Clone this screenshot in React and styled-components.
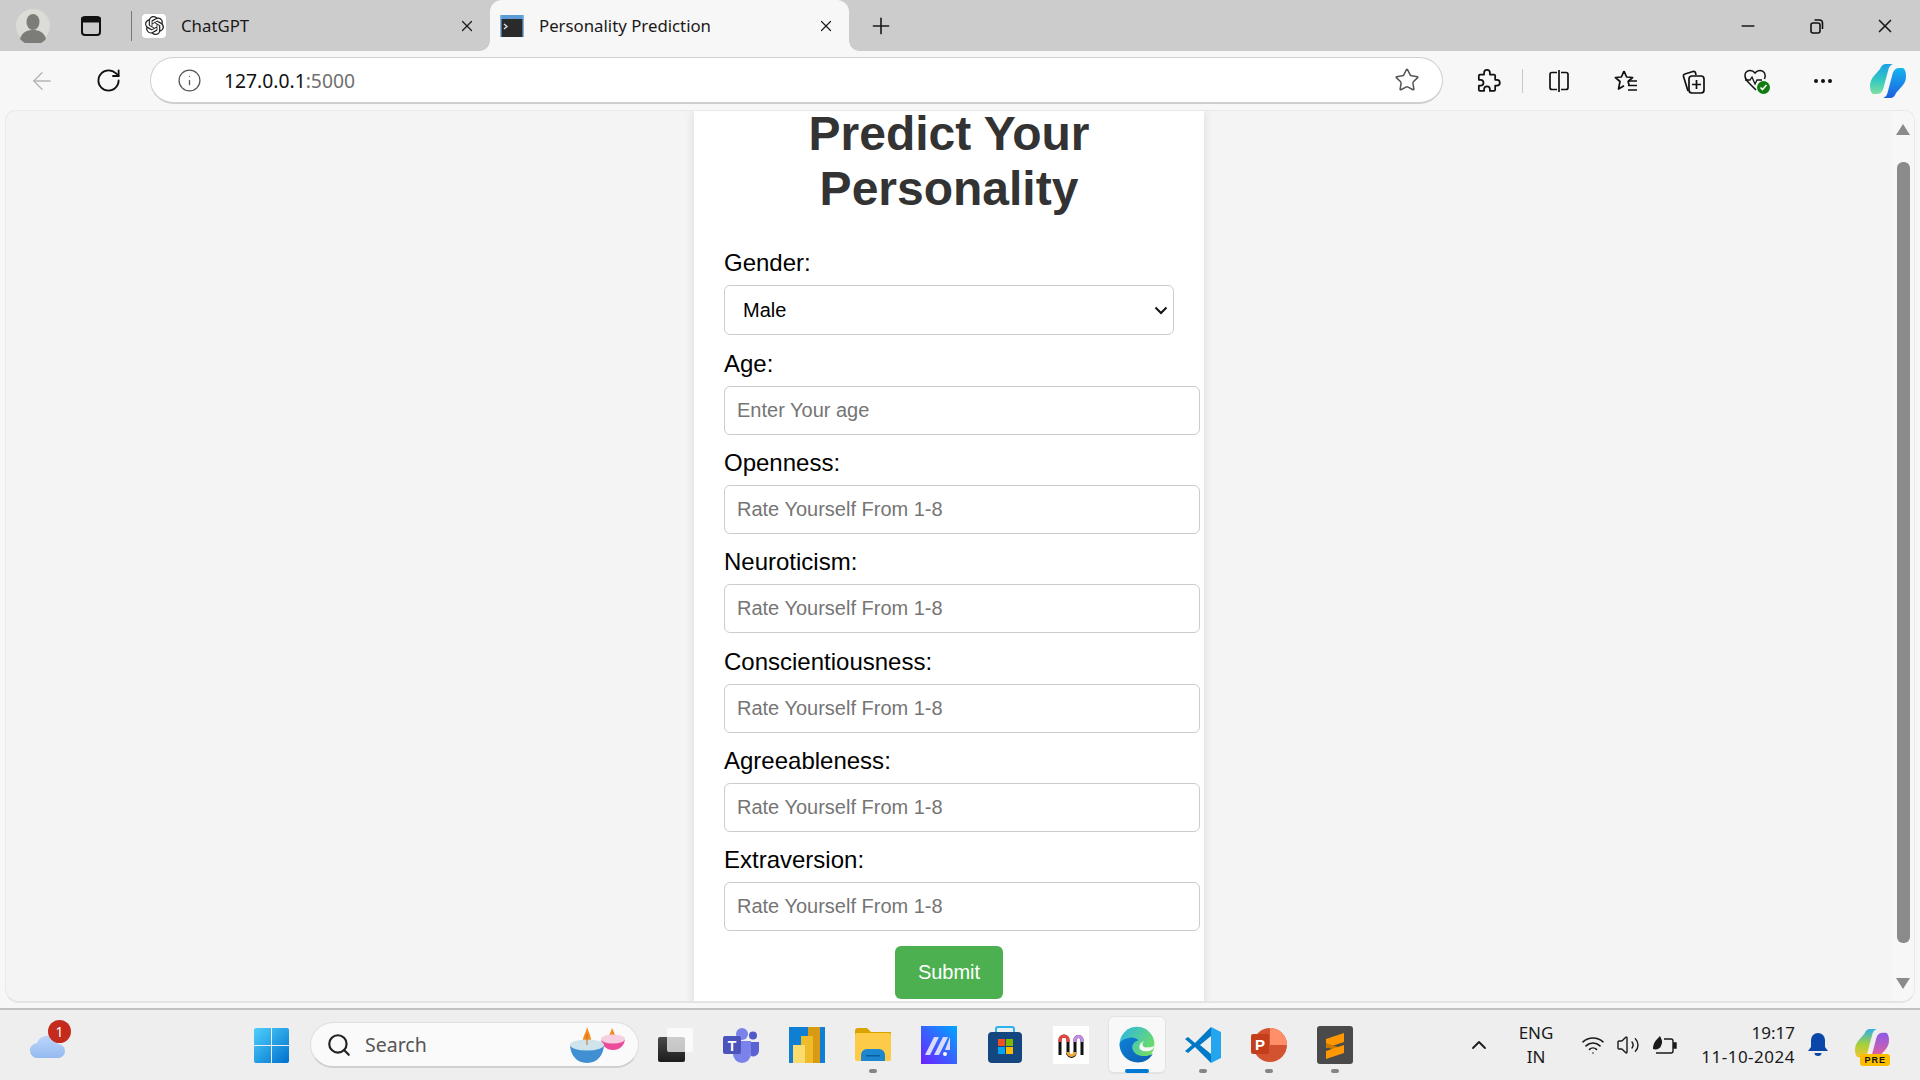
import React from 'react';
import styled, { createGlobalStyle } from 'styled-components';
import { X, Plus, Minus, Ellipsis, ChevronUp, Search as SearchGlyph, Wifi, Volume2, Star, Info, RotateCw, ArrowLeft } from 'lucide-react';
import { SiOpenai } from 'react-icons/si';

const GlobalStyle = createGlobalStyle`
  html, body { margin: 0; height: 100%; overflow: hidden; }
  #root { height: 100%; }
  * { font-synthesis: none; }
`;

const Screen = styled.div`
  width: 1920px;
  height: 1080px;
  display: flex;
  flex-direction: column;
  background: #f7f7f7;
  font-family: "Noto Sans", "Open Sans", sans-serif;
  overflow: hidden;
`;

/* browser tab strip */
const TabStrip = styled.div`
  height: 51px;
  flex: none;
  display: flex;
  align-items: center;
  background: #cccccc;
  color: #1a1a1a;
`;

const Slot = styled.div`
  width: ${p => p.$w}px;
  height: 100%;
  flex: none;
  margin-left: ${p => p.$ml || 0}px;
  display: flex;
  align-items: center;
  justify-content: center;
`;

const Divider = styled.div`
  width: 1px;
  height: ${p => p.$h}px;
  flex: none;
  margin-left: ${p => p.$ml || 0}px;
  margin-right: ${p => p.$mr || 0}px;
  background: ${p => p.$color};
`;

const Tab = styled.div`
  position: relative;
  width: ${p => p.$w}px;
  height: 51px;
  flex: none;
  box-sizing: border-box;
  padding: 0 14px 0 ${p => p.$pl}px;
  display: flex;
  align-items: center;
  font-size: 16.8px;
  border-radius: 12px 12px 0 0;
  background: ${p => (p.$active ? '#f7f7f7' : 'transparent')};

  ${p => p.$active && `
    &::before, &::after {
      content: '';
      position: absolute;
      bottom: 0;
      width: 10px;
      height: 10px;
      background: radial-gradient(circle at var(--cx) 0, #cccccc 9.5px, #f7f7f7 10px);
    }
    &::before { left: -10px; --cx: 0; }
    &::after { right: -10px; --cx: 100%; }
  `}
`;

const TabFavicon = styled.div`
  width: 24px;
  height: 24px;
  flex: none;
  margin-right: 15px;
  display: flex;
  align-items: center;
  justify-content: center;
  border-radius: 4px;
  background: ${p => p.$bg || 'transparent'};
`;

const TabTitle = styled.span`
  flex: 1;
  white-space: nowrap;
`;

const WindowControls = styled.div`
  margin-left: auto;
  height: 100%;
  display: flex;
  align-items: center;
  padding-right: 1px;
`;

/* address bar row */
const Toolbar = styled.div`
  height: 59px;
  flex: none;
  display: flex;
  align-items: center;
  padding-left: 9px;
  box-sizing: border-box;
  background: #f7f7f7;
`;

const Address = styled.div`
  width: 1293px;
  height: 47px;
  flex: none;
  margin-left: 9px;
  box-sizing: border-box;
  padding: 0 22px 0 26px;
  display: flex;
  align-items: center;
  background: #fff;
  border: 1px solid #cfcfcf;
  border-bottom-width: 2px;
  border-radius: 24px;
`;

const Url = styled.div`
  flex: 1;
  margin-left: 22px;
  font-size: 19.3px;
  color: #111;
  span { color: #6f6f6f; }
`;

/* page area */
const Viewport = styled.div`
  flex: 1;
  min-height: 0;
  margin: 0 5px;
  display: flex;
  background: #f4f4f4;
  border: 1px solid #e9e9e9;
  border-bottom: 2px solid #e4e4e4;
  border-radius: 10px 10px 14px 14px;
  overflow: hidden;
`;

const PageScroll = styled.div`
  flex: 1;
  min-width: 0;
  display: flex;
  justify-content: center;
  overflow: hidden;
`;

const Card = styled.div`
  width: 450px;
  height: 950px;
  flex: none;
  padding: 0 30px;
  background: #fff;
  box-shadow: 0 0 10px rgba(0, 0, 0, 0.1);
  font-family: "Liberation Sans", Arial, sans-serif;
`;

const Title = styled.h1`
  margin: -5px 0 33px;
  font-size: 48px;
  font-weight: 700;
  line-height: 55px;
  text-align: center;
  color: #333;
`;

const Form = styled.form`
  display: flex;
  flex-direction: column;
  align-items: flex-start;
`;

const Label = styled.label`
  display: block;
  margin-bottom: 8.5px;
  font-size: 24px;
  line-height: 27.5px;
  color: #000;
`;

const GenderSelect = styled.select`
  appearance: none;
  width: 450px;
  height: 50px;
  margin-bottom: 14.5px;
  padding: 0 18px;
  box-sizing: border-box;
  font-family: inherit;
  font-size: 20px;
  color: #000;
  border: 1px solid #ccc;
  border-radius: 6px;
  background: #fff url("data:image/svg+xml,%3Csvg xmlns='http://www.w3.org/2000/svg' width='14' height='9' viewBox='0 0 14 9'%3E%3Cpath d='M1.5 1.500L7 7l5.500-5.500' fill='none' stroke='%23111' stroke-width='2'/%3E%3C/svg%3E") no-repeat right 5px center;
`;

const Field = styled.input`
  width: 450px;
  height: 23px;
  margin-bottom: 14.4px;
  padding: 12px;
  font-family: inherit;
  font-size: 20px;
  color: #000;
  background: #fff;
  border: 1px solid #ccc;
  border-radius: 6px;
  &::placeholder { color: #757575; }
`;

const SubmitButton = styled.button`
  align-self: center;
  height: 53px;
  padding: 0 22.5px;
  border: 0;
  border-radius: 6px;
  background: #4caf50;
  color: #fff;
  font-family: inherit;
  font-size: 20px;
`;

const ScrollRail = styled.div`
  width: 22px;
  flex: none;
  display: flex;
  flex-direction: column;
  align-items: center;
  background: #f7f7f7;
`;

const ScrollThumb = styled.div`
  width: 13px;
  height: 781px;
  flex: none;
  margin: 27px 0 35px;
  border-radius: 6px;
  background: #8b8b8b;
`;

const ScrollArrow = styled.div`
  width: 0;
  height: 0;
  flex: none;
  margin-top: ${p => (p.$down ? 0 : 13)}px;
  border-left: 7.5px solid transparent;
  border-right: 7.5px solid transparent;
  ${p => (p.$down ? 'border-top: 11px solid #8b8b8b;' : 'border-bottom: 11px solid #8b8b8b;')}
`;

/* windows taskbar */
const Taskbar = styled.div`
  height: 72px;
  flex: none;
  margin-top: 5px;
  box-sizing: border-box;
  display: flex;
  align-items: center;
  background: #eeeeee;
  border-top: 2px solid #c2c2c2;
`;

const TaskSlot = styled.div`
  position: relative;
  width: 66px;
  height: 100%;
  flex: none;
  display: flex;
  align-items: center;
  justify-content: center;

  ${p => p.$active && `
    &::before {
      content: '';
      position: absolute;
      left: 4px;
      right: 4px;
      top: 6px;
      bottom: 6px;
      background: #f8f8f8;
      border: 1px solid #e3e3e3;
      border-bottom-width: 2px;
      border-radius: 6px;
    }
    svg { position: relative; }
  `}

  ${p => (p.$running || p.$active) && `
    &::after {
      content: '';
      position: absolute;
      left: 50%;
      bottom: 7px;
      width: ${p.$active ? 24 : 8}px;
      height: 4px;
      transform: translateX(-50%);
      border-radius: 2px;
      background: ${p.$active ? '#0078d4' : '#858585'};
    }
  `}
`;

const WeatherSlot = styled.div`
  position: relative;
  width: 48px;
  height: 100%;
  flex: none;
  margin: 0 166px 0 24px;
  display: flex;
  align-items: center;
  justify-content: center;
`;

const Badge = styled.div`
  position: absolute;
  top: 10px;
  right: 1px;
  width: 23px;
  height: 23px;
  border-radius: 50%;
  display: flex;
  align-items: center;
  justify-content: center;
  background: #c42b1c;
  color: #fff;
  font-size: 14px;
`;

const SearchBox = styled.div`
  width: 329px;
  height: 46px;
  flex: none;
  margin: 0 3px 0 6px;
  box-sizing: border-box;
  padding: 0 11px 0 15px;
  display: flex;
  align-items: center;
  background: #fafafa;
  border: 1px solid #dedede;
  border-bottom: 2px solid #cfcfcf;
  border-radius: 23px;
  color: #555;
  font-size: 19.5px;
`;

const SearchText = styled.span`
  flex: 1;
  margin-left: 13px;
`;

const Tray = styled.div`
  margin-left: auto;
  height: 100%;
  display: flex;
  align-items: center;
  padding-right: 17px;
  color: #1a1a1a;
`;

const TrayText = styled.div`
  width: ${p => p.$w}px;
  flex: none;
  margin-left: ${p => p.$ml || 0}px;
  margin-top: -2px;
  display: flex;
  flex-direction: column;
  gap: 1px;
  align-items: ${p => p.$align};
  font-size: 17px;
  line-height: 23px;
`;

const DateText = styled.span`
  letter-spacing: 0.5px;
`;

/* --- drawn icons --- */
const Profile = () => (
  <svg width="34" height="34" viewBox="0 0 34 34">
    <circle cx="17" cy="17" r="17" fill="#dcdcd6" />
    <ellipse cx="17" cy="13" rx="6.500" ry="8" fill="#7c7c78" />
    <path d="M4 30c2-7 7-9 13-9s11 2 13 9a17 17 0 0 1-26 0z" fill="#7c7c78" />
  </svg>
);

const TabsToggle = () => (
  <svg width="22" height="22" viewBox="0 0 22 22" fill="none" stroke="#111" strokeWidth="2">
    <rect x="2" y="2" width="18" height="18" rx="3" />
    <path d="M2 3.500h18v3H2z" fill="#111" />
  </svg>
);

const ConsoleFavicon = () => (
  <svg width="24" height="24" viewBox="0 0 24 24">
    <rect x="0" y="1" width="24" height="22" fill="#2a2a2a" />
    <rect x="0" y="1" width="24" height="4" fill="#5b9bd8" />
    <rect x="0" y="1" width="1.500" height="22" fill="#7fb2e0" />
    <rect x="22.500" y="1" width="1.500" height="22" fill="#7fb2e0" />
    <path d="M4 10l3 2.500-3 2.500" stroke="#ddd" strokeWidth="1.400" fill="none" />
  </svg>
);

const Restore = () => (
  <svg width="18" height="18" viewBox="0 0 18 18" fill="none" stroke="#111" strokeWidth="1.600">
    <rect x="3" y="6" width="9" height="10" rx="2" />
    <path d="M6.500 3h5a3 3 0 0 1 3 3v6" />
  </svg>
);

const PuzzlePiece = () => (
  <svg width="28" height="28" viewBox="0 0 24 24" fill="none" stroke="#111" strokeWidth="1.500" strokeLinejoin="round">
    <path d="M9.500 5a2.500 2.500 0 0 1 5 0v1.500H18a1 1 0 0 1 1 1V11h1.500a2.500 2.500 0 0 1 0 5H19v3.500a1 1 0 0 1-1 1h-3.500V19a2.500 2.500 0 0 0-5 0v1.500H6a1 1 0 0 1-1-1V16h1.500a2.500 2.500 0 0 0 0-5H5V7.500a1 1 0 0 1 1-1h3.500z" />
  </svg>
);

const SplitScreen = () => (
  <svg width="26" height="26" viewBox="0 0 26 26" fill="none" stroke="#111" strokeWidth="1.700">
    <path d="M11 4.500H6a2 2 0 0 0-2 2v13a2 2 0 0 0 2 2h5M15 4.500h5a2 2 0 0 1 2 2v13a2 2 0 0 1-2 2h-5M13 2v22" />
  </svg>
);

const Favorites = () => (
  <svg width="26" height="26" viewBox="0 0 26 26" fill="none" stroke="#111" strokeWidth="1.700" strokeLinejoin="round">
    <path d="M11 3l2.600 6 6 .5-4.500 4 1 3.500M11 3L8.400 9l-6 .5 4.600 4-1.500 7.500 5.500-3.300" />
    <path d="M15 13h9M15 17.500h9M15 22h9" />
  </svg>
);

const Collections = () => (
  <svg width="28" height="28" viewBox="0 0 28 28" fill="none" stroke="#111" strokeWidth="1.700" strokeLinejoin="round">
    <path d="M9 24L4.500 9.500a2 2 0 0 1 1.400-2.500L14 4.500a2 2 0 0 1 2.500 1.300L17 8" />
    <rect x="10" y="9" width="15" height="17" rx="3" />
    <path d="M17.500 13v9M13 17.500h9" />
  </svg>
);

const HealthHeart = () => (
  <svg width="30" height="30" viewBox="0 0 30 30">
    <path d="M7 17C3 13 2 10 3.500 7c2-3.500 7-3.500 9.500 0 2.500-3.500 7.500-3.500 9.500 0 1 2 1 4 0 6M7 17l7 7" fill="none" stroke="#111" strokeWidth="1.500" />
    <path d="M3 14h5l2-3 3 7 2-4h5" fill="none" stroke="#111" strokeWidth="1.300" />
    <circle cx="21.500" cy="21.500" r="6.500" fill="#107c10" />
    <path d="M18.500 21.500l2 2 4-4.500" fill="none" stroke="#fff" strokeWidth="1.600" />
  </svg>
);

const CopilotMark = ({ size = 36, idA, tone, idC }) => (
  <svg width={size} height={size} viewBox="0 0 36 36">
    <defs>
      <linearGradient id={idA} x1="0" y1="0" x2="0" y2="1">
        <stop offset="0" stopColor={tone === 'pre' ? '#2fb0e8' : '#1aa0e6'} />
        <stop offset="0.55" stopColor={tone === 'pre' ? '#a6d13b' : '#35c9c0'} />
        <stop offset="1" stopColor={tone === 'pre' ? '#f3c52d' : '#7fe0a0'} />
      </linearGradient>
      <linearGradient id={idC} x1="0" y1="0" x2="0" y2="1">
        <stop offset="0" stopColor={tone === 'pre' ? '#8a5be8' : '#15b5ee'} />
        <stop offset="1" stopColor={tone === 'pre' ? '#f4608f' : '#1d5fe0'} />
      </linearGradient>
    </defs>
    <path d="M10 6c1-3 3-5 6-5h7c-3 1-4 3-5 7l-4 15c-1 5-3 8-7 8H3C1 30 0 27 0 23c0-3 1-6 3-9l7-8z" fill={`url(#${idA})`} />
    <path d="M26 30c-1 3-3 5-6 5h-7c3-1 4-3 5-7l4-15c1-5 3-8 7-8h4c2 1 3 4 3 8s-1 6-3 9l-7 8z" fill={`url(#${idC})`} />
  </svg>
);

const Cloud = () => (
  <svg width="36" height="28" viewBox="0 0 36 28">
    <defs>
      <linearGradient id="cl" x1="0" y1="0" x2="0" y2="1">
        <stop offset="0" stopColor="#bcd6fb" />
        <stop offset="1" stopColor="#94baf0" />
      </linearGradient>
    </defs>
    <path d="M8 27a7.500 7.500 0 0 1-1-15 11 11 0 0 1 21 1 7 7 0 0 1 0 14z" fill="url(#cl)" />
  </svg>
);

const WinLogo = () => (
  <svg width="35" height="35" viewBox="0 0 35 35">
    <defs>
      <linearGradient id="wn" x1="0" y1="0" x2="1" y2="1">
        <stop offset="0" stopColor="#4fd0fb" />
        <stop offset="1" stopColor="#0070cf" />
      </linearGradient>
    </defs>
    <path d="M0 2a2 2 0 0 1 2-2h15v17H0zM18 0h15a2 2 0 0 1 2 2v15H18zM0 18h17v17H2a2 2 0 0 1-2-2zM18 18h17v15a2 2 0 0 1-2 2H18z" fill="url(#wn)" />
  </svg>
);

const Diyas = () => (
  <svg width="60" height="38" viewBox="0 0 60 38">
    <path d="M45 2c2 4 3 6 3 9s-1 4-3 4-3-1-3-4 2-5 3-9z" fill="#f58a1f" />
    <path d="M34 12a12 5 0 0 0 24 0c0 6-4 12-12 12S34 18 34 12z" fill="#ea4c9b" />
    <ellipse cx="46" cy="13" rx="12" ry="4.500" fill="#f6cfe0" />
    <path d="M20 1c2 6 4 9 4 13s-2 6-4 6-4-2-4-6 3-7 4-13z" fill="#f58a1f" />
    <path d="M3 18a17 6 0 0 0 34 0c0 10-6 19-17 19S3 28 3 18z" fill="#3f8fd2" />
    <ellipse cx="20" cy="19" rx="17" ry="5.500" fill="#cfe3ea" />
    <path d="M20 19V8" stroke="#c96f18" strokeWidth="1" />
  </svg>
);

const TaskView = () => (
  <svg width="36" height="36" viewBox="0 0 36 36">
    <defs>
      <linearGradient id="tv" x1="0" y1="0" x2="0" y2="1">
        <stop offset="0" stopColor="#4a4a4a" />
        <stop offset="1" stopColor="#1c1c1c" />
      </linearGradient>
    </defs>
    <rect x="1" y="10" width="27" height="25" rx="2" fill="url(#tv)" />
    <rect x="10" y="1" width="26" height="24" rx="2" fill="#ffffff" fillOpacity="0.72" />
  </svg>
);

const Teams = () => (
  <svg width="36" height="36" viewBox="0 0 36 36">
    <circle cx="19" cy="7" r="6" fill="#7b83eb" />
    <circle cx="30" cy="8.500" r="4" fill="#5059c9" />
    <path d="M26 15h10v9a6 6 0 0 1-8 5z" fill="#5b63d3" />
    <path d="M10 14h18v13a9 9 0 0 1-18 0z" fill="#7b83eb" />
    <rect x="0" y="9" width="18" height="18" rx="2" fill="#4b53bc" />
    <text x="9" y="23.500" textAnchor="middle" fontFamily="'Liberation Sans', sans-serif" fontWeight="700" fontSize="14" fill="#fff">T</text>
  </svg>
);

const PowerBi = () => (
  <svg width="36" height="36" viewBox="0 0 36 36">
    <rect width="36" height="36" fill="#0f7fd4" />
    <rect x="19" y="0" width="12" height="36" fill="#d89a12" />
    <rect x="12" y="9" width="12" height="27" fill="#f0bb28" />
    <rect x="4" y="18" width="12" height="18" fill="#f9dc6d" />
  </svg>
);

const FolderIcon = () => (
  <svg width="36" height="34" viewBox="0 0 36 34">
    <path d="M0 3a3 3 0 0 1 3-3h9l4 4h20v4H0z" fill="#d9a400" />
    <rect x="0" y="5" width="36" height="28" rx="2" fill="#fdcb47" />
    <path d="M6 33v-6a6 6 0 0 1 6-6h12a6 6 0 0 1 6 6v6z" fill="#1c86d1" />
    <rect x="11" y="27" width="14" height="1.500" fill="#0d5c99" />
  </svg>
);

const MaxIcon = () => (
  <svg width="36" height="38" viewBox="0 0 36 38">
    <defs>
      <linearGradient id="mx" x1="0" y1="1" x2="1" y2="0">
        <stop offset="0" stopColor="#6e1fff" />
        <stop offset="1" stopColor="#00a7ff" />
      </linearGradient>
    </defs>
    <rect width="36" height="38" fill="url(#mx)" />
    <path d="M4 29L13 11h5L9 29zM13 29L22 11h5l-9 18zM24 24l5-13v13z" fill="#d9dcff" />
    <circle cx="24" cy="28" r="2" fill="#fff" />
  </svg>
);

const StoreIcon = () => (
  <svg width="36" height="38" viewBox="0 0 36 38">
    <path d="M9 8V3a2 2 0 0 1 2-2h14a2 2 0 0 1 2 2v5" fill="none" stroke="#2ab3ee" strokeWidth="2" />
    <rect x="1" y="6" width="34" height="31" rx="4" fill="#14467f" />
    <rect x="11" y="13" width="7" height="7" fill="#f25022" />
    <rect x="19" y="13" width="7" height="7" fill="#7fba00" />
    <rect x="11" y="21" width="7" height="7" fill="#00a4ef" />
    <rect x="19" y="21" width="7" height="7" fill="#ffb900" />
  </svg>
);

const MiroLike = () => (
  <svg width="36" height="38" viewBox="0 0 36 38">
    <rect width="36" height="38" fill="#fff" />
    <path d="M7 29V14a4 4 0 0 1 8 0v15" fill="none" stroke="#111" strokeWidth="3" />
    <path d="M7 16v-2a4 4 0 0 1 8 0v2" fill="none" stroke="#e8483f" strokeWidth="3" />
    <path d="M15 27a3.500 3.500 0 0 0 7 0V14a3.500 3.500 0 0 1 7 0v15" fill="none" stroke="#111" strokeWidth="3" />
    <path d="M15 26a3.500 3.500 0 0 0 7 0" fill="none" stroke="#f2a93b" strokeWidth="3" />
    <path d="M22 16v-2a3.500 3.500 0 0 1 7 0v2" fill="none" stroke="#c58be8" strokeWidth="3" />
  </svg>
);

const EdgeIcon = () => (
  <svg width="38" height="38" viewBox="0 0 48 48">
    <defs>
      <linearGradient id="eg1" x1="0" y1="0" x2="1" y2="0.700">
        <stop offset="0" stopColor="#2bb6ea" />
        <stop offset="1" stopColor="#74e05c" />
      </linearGradient>
      <linearGradient id="eg2" x1="0" y1="0" x2="1" y2="1">
        <stop offset="0" stopColor="#0f80d6" />
        <stop offset="1" stopColor="#0b5fb0" />
      </linearGradient>
    </defs>
    <circle cx="24" cy="23" r="22" fill="url(#eg1)" />
    <path d="M2 23C2 35 12 46 25 46c8 0 15-4 19-11-3 2-7 3-11 3-8 0-15-5-15-11 0-4 3-8 8-9-3-3-8-4-12-3C8 16 3 18 2 23z" fill="url(#eg2)" />
    <path d="M27 27c0 3 4 5 9 5 5 0 9-2 10-7-3 2-7 2-10 2-3 0-5-1-5-4 0-2 1-3 2-4-3 1-6 4-6 8z" fill="#f8f8f8" />
  </svg>
);

const VsCode = () => (
  <svg width="36" height="38" viewBox="0 0 36 38">
    <path d="M26 1l10 5v26l-10 5z" fill="#24a6ee" />
    <path d="M26 1L10 17 3 11 0 13l7 6-7 6 3 2 7-6 16 16v-9l-11-9 11-9z" fill="#0078c8" />
  </svg>
);

const PowerPoint = () => (
  <svg width="36" height="36" viewBox="0 0 36 36">
    <circle cx="19" cy="18" r="17" fill="#d35230" />
    <path d="M19 1a17 17 0 0 1 17 17H19z" fill="#ff8f6b" />
    <rect x="0" y="7" width="18" height="20" rx="2" fill="#c43e1c" />
    <text x="9" y="23" textAnchor="middle" fontFamily="'Liberation Sans', sans-serif" fontWeight="700" fontSize="15" fill="#fff">P</text>
  </svg>
);

const Sublime = () => (
  <svg width="36" height="38" viewBox="0 0 36 38">
    <rect width="36" height="38" rx="3" fill="#4a4a4a" />
    <path d="M27 7v9L9 22v-9z" fill="#ff9800" />
    <path d="M9 17l18 6v4L9 21z" fill="#c97800" />
    <path d="M27 19v8L9 33v-8z" fill="#ff9800" />
  </svg>
);

const Battery = () => (
  <svg width="26" height="22" viewBox="0 0 26 22" fill="none" stroke="#1a1a1a" strokeWidth="1.400">
    <path d="M4 19h15a2 2 0 0 0 2-2V7a2 2 0 0 0-2-2h-7" />
    <path d="M21 9h3v5h-3" fill="#1a1a1a" />
    <path d="M1 15c0-6 3-9 7-13 2 4 3 6 1 10-1 3-5 4-8 3z" fill="#1a1a1a" stroke="none" />
  </svg>
);

const Bell = () => (
  <svg width="20" height="24" viewBox="0 0 20 24" fill="#0b47a8">
    <path d="M10 0a7 7 0 0 1 7 7v7l3 4H0l3-4V7a7 7 0 0 1 7-7z" />
    <path d="M6.500 20h7a3.500 3 0 0 1-7 0z" />
  </svg>
);

const PreTag = styled.div`
  position: absolute;
  right: 0;
  bottom: 14px;
  padding: 0 4px;
  border-radius: 3px;
  background: #fcbd00;
  color: #111;
  font-size: 9px;
  line-height: 12px;
  font-weight: 700;
  letter-spacing: 1px;
  font-family: "Liberation Sans", sans-serif;
`;

const PreWrap = styled.div`
  position: relative;
  width: 36px;
  height: 100%;
  display: flex;
  align-items: center;
  justify-content: center;
`;

const fields = ['Openness', 'Neuroticism', 'Conscientiousness', 'Agreeableness', 'Extraversion'];

export default function App() {
  return (
    <Screen>
      <GlobalStyle />
      <TabStrip>
        <Slot $w={34} $ml={16}><Profile /></Slot>
        <Slot $w={22} $ml={30}><TabsToggle /></Slot>
        <Divider $h={30} $ml={29} $color="#777" />
        <Tab $w={358} $pl={10}>
          <TabFavicon $bg="#fff"><SiOpenai size={19} color="#222" /></TabFavicon>
          <TabTitle>ChatGPT</TabTitle>
          <X size={18} strokeWidth={1.6} />
        </Tab>
        <Tab $w={359} $pl={10} $active>
          <TabFavicon><ConsoleFavicon /></TabFavicon>
          <TabTitle>Personality Prediction</TabTitle>
          <X size={18} strokeWidth={1.6} />
        </Tab>
        <Slot $w={64}><Plus size={26} strokeWidth={1.5} /></Slot>
        <WindowControls>
          <Slot $w={68}><Minus size={20} strokeWidth={1.8} /></Slot>
          <Slot $w={69}><Restore /></Slot>
          <Slot $w={68}><X size={22} strokeWidth={1.8} /></Slot>
        </WindowControls>
      </TabStrip>

      <Toolbar>
        <Slot $w={66}><ArrowLeft size={28} strokeWidth={1.2} color="#b5b5b5" /></Slot>
        <Slot $w={66}><RotateCw size={27} strokeWidth={1.6} color="#111" /></Slot>
        <Address>
          <Info size={25} strokeWidth={1.2} color="#555" />
          <Url>127.0.0.1<span>:5000</span></Url>
          <Star size={26} strokeWidth={1.4} color="#555" />
        </Address>
        <Slot $w={64} $ml={12}><PuzzlePiece /></Slot>
        <Divider $h={24} $ml={3} $mr={3} $color="#c8c8c8" />
        <Slot $w={66}><SplitScreen /></Slot>
        <Slot $w={68}><Favorites /></Slot>
        <Slot $w={65}><Collections /></Slot>
        <Slot $w={63}><HealthHeart /></Slot>
        <Slot $w={70}><Ellipsis size={24} strokeWidth={2} color="#111" /></Slot>
        <Slot $w={60}><CopilotMark idA="cpa" tone="edge" idC="cpc" /></Slot>
      </Toolbar>

      <Viewport>
        <PageScroll>
          <Card>
            <Title>Predict Your Personality</Title>
            <Form>
              <Label htmlFor="gender">Gender:</Label>
              <GenderSelect id="gender" defaultValue="Male">
                <option>Male</option>
                <option>Female</option>
              </GenderSelect>
              <Label htmlFor="age">Age:</Label>
              <Field id="age" placeholder="Enter Your age" />
              {fields.map(name => (
                <React.Fragment key={name}>
                  <Label htmlFor={name}>{name}:</Label>
                  <Field id={name} placeholder="Rate Yourself From 1-8" />
                </React.Fragment>
              ))}
              <SubmitButton type="button">Submit</SubmitButton>
            </Form>
          </Card>
        </PageScroll>
        <ScrollRail>
          <ScrollArrow />
          <ScrollThumb />
          <ScrollArrow $down />
        </ScrollRail>
      </Viewport>

      <Taskbar>
        <WeatherSlot>
          <Cloud />
          <Badge>1</Badge>
        </WeatherSlot>
        <TaskSlot><WinLogo /></TaskSlot>
        <SearchBox>
          <SearchGlyph size={26} strokeWidth={2} color="#222" />
          <SearchText>Search</SearchText>
          <Diyas />
        </SearchBox>
        <TaskSlot><TaskView /></TaskSlot>
        <TaskSlot><Teams /></TaskSlot>
        <TaskSlot><PowerBi /></TaskSlot>
        <TaskSlot $running><FolderIcon /></TaskSlot>
        <TaskSlot><MaxIcon /></TaskSlot>
        <TaskSlot><StoreIcon /></TaskSlot>
        <TaskSlot><MiroLike /></TaskSlot>
        <TaskSlot $active><EdgeIcon /></TaskSlot>
        <TaskSlot $running><VsCode /></TaskSlot>
        <TaskSlot $running><PowerPoint /></TaskSlot>
        <TaskSlot $running><Sublime /></TaskSlot>
        <Tray>
          <Slot $w={30}><ChevronUp size={24} strokeWidth={1.8} /></Slot>
          <TrayText $w={60} $ml={12} $align="center"><span>ENG</span><span>IN</span></TrayText>
          <Slot $w={34} $ml={10}><Wifi size={24} strokeWidth={1.6} /></Slot>
          <Slot $w={36}><Volume2 size={24} strokeWidth={1.4} /></Slot>
          <Slot $w={38}><Battery /></Slot>
          <TrayText $w={111} $align="flex-end"><span>19:17</span><DateText>11-10-2024</DateText></TrayText>
          <Slot $w={46}><Bell /></Slot>
          <Slot $w={62}>
            <PreWrap>
              <CopilotMark size={34} idA="cpp" tone="pre" idC="cpq" />
              <PreTag>PRE</PreTag>
            </PreWrap>
          </Slot>
        </Tray>
      </Taskbar>
    </Screen>
  );
}
